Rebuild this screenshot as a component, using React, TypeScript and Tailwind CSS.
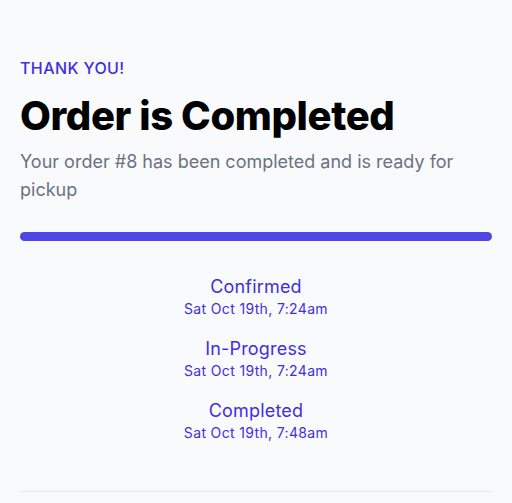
import React from "react";

const steps = [
  { label: "Confirmed", time: "Sat Oct 19th, 7:24am" },
  { label: "In-Progress", time: "Sat Oct 19th, 7:24am" },
  { label: "Completed", time: "Sat Oct 19th, 7:48am" },
];

export default function App() {
  return (
    <div className="min-h-screen bg-gray-50 font-['Inter',sans-serif]">
      <div className="px-5 pt-[56px]">
        <p className="text-base font-medium tracking-wide text-[#3f2fe0]">THANK YOU!</p>
        <h1 className="mt-3 text-[40px] leading-[48px] font-extrabold tracking-[-0.01em] text-black">
          Order is Completed
        </h1>
        <p className="mt-2 text-lg leading-7 text-gray-500">
          Your order #8 has been completed and is ready for pickup
        </p>

        <div className="mt-[28px] h-[9px] w-full rounded-full bg-[#4f46e5]" />

        <div className="mt-[34px] flex flex-col gap-[18px]">
          {steps.map((s) => (
            <div key={s.label} className="flex flex-col items-center text-[#3f2fe0]">
              <span className="text-lg leading-6 tracking-[0.01em]">{s.label}</span>
              <span className="text-sm leading-5 tracking-wide">{s.time}</span>
            </div>
          ))}
        </div>

        <div className="mt-[48px] border-t border-gray-200" />
      </div>
    </div>
  );
}
